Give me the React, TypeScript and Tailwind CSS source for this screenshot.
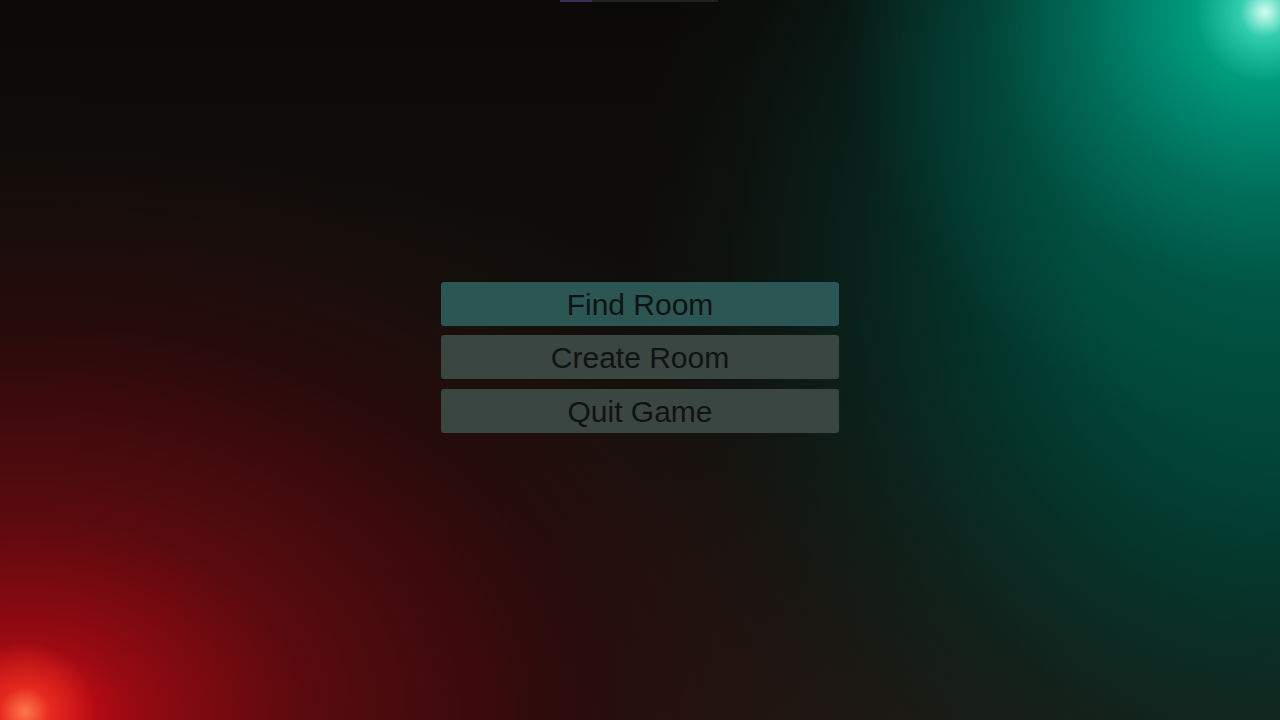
import React from "react";

const BUTTONS = [
  { label: "Find Room", active: true },
  { label: "Create Room", active: false },
  { label: "Quit Game", active: false },
];

export default function App() {
  return (
    <div className="relative w-[1280px] h-[720px] overflow-hidden bg-[#0b0b09] font-['Liberation_Sans',Arial,sans-serif]">
      {/* background glows */}
      <div className="absolute inset-0 bg-[radial-gradient(circle_70px_at_1265px_12px,rgba(220,255,244,0.95)_0px,rgba(80,225,195,0.55)_25px,transparent_70px),radial-gradient(circle_420px_at_1265px_12px,#20c8a8_0px,#00a888_40px,#008a70_110px,rgba(0,120,98,0.8)_180px,rgba(0,96,78,0.45)_280px,transparent_420px),radial-gradient(ellipse_640px_700px_at_1280px_250px,rgba(0,76,60,1)_0%,rgba(0,72,58,0.95)_30%,rgba(0,60,48,0.72)_52%,rgba(6,46,37,0.45)_72%,rgba(10,36,29,0.18)_88%,transparent_100%),radial-gradient(circle_70px_at_25px_712px,rgba(255,130,80,0.9)_0px,rgba(255,70,40,0.5)_25px,transparent_70px),radial-gradient(ellipse_880px_620px_at_25px_715px,#e8141c_0%,#d00c18_3%,#c00a14_6%,#9a0a12_12%,#800a10_19%,#5a0a0e_32%,#4c0b0e_40%,#3a0a0c_52%,rgba(42,10,10,0.8)_64%,rgba(40,14,12,0.45)_78%,rgba(34,16,12,0.15)_90%,transparent_100%),linear-gradient(to_bottom,#0b0a08_0%,#110f0c_50%,#1f1813_100%)]" />

      {/* top loading strip */}
      <div className="absolute top-0 left-[560px] flex h-[2px]">
        <div className="w-[32px] bg-[#3b2c58]" />
        <div className="w-[126px] bg-[#1d2320]" />
      </div>

      <div className="relative flex h-full flex-col items-center pt-[282px]">
        <div className="flex w-[398px] flex-col gap-[9px]">
          {BUTTONS.map((b, i) => (
            <button
              key={b.label}
              className={`h-[44px] w-full rounded-[3px] pt-[1px] text-[30px] leading-none text-[#101310] ${
                b.active ? "bg-[#2b5654]" : "bg-[#3a4641]"
              } ${i === 2 ? "mt-[1px]" : ""}`}
            >
              {b.label}
            </button>
          ))}
        </div>
      </div>
    </div>
  );
}
